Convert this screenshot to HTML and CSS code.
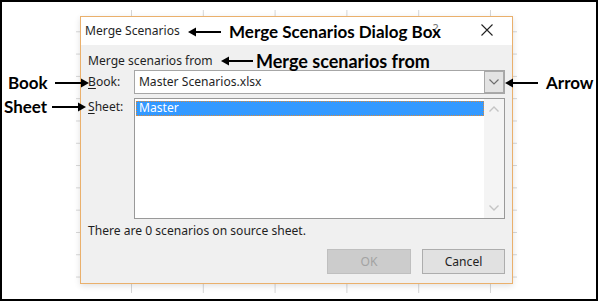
FILE: index.html
```html
<!DOCTYPE html>
<html>
<head>
<meta charset="utf-8">
<link rel="stylesheet" href="styles.css">
</head>
<body>
<div class="frame">
  <div class="sheet">
    <div class="dialog">
      <div class="titlebar">
        <span class="title">Merge Scenarios</span>
        <span class="help">?</span>
        <svg class="close" width="12" height="12" viewBox="0 0 12 12"><path d="M0.5 0.5 L11.5 11.5 M11.5 0.5 L0.5 11.5" stroke="#222" stroke-width="1.1" fill="none"/></svg>
      </div>
      <div class="body">
        <div class="group-label">Merge scenarios from</div>
        <div class="row">
          <span class="label"><u>B</u>ook:</span>
          <div class="combo">
            <span class="combo-text">Master Scenarios.xlsx</span>
            <span class="drop">
              <svg width="10" height="6" viewBox="0 0 10 6"><path d="M0.5 0.5 L5 5 L9.5 0.5" stroke="#6d6d6d" stroke-width="1.2" fill="none"/></svg>
            </span>
          </div>
        </div>
        <div class="row sheet-row">
          <span class="label"><u>S</u>heet:</span>
          <div class="listbox">
            <div class="items">
              <div class="item selected">Master</div>
            </div>
            <div class="scrollbar">
              <svg width="10" height="6" viewBox="0 0 10 6"><path d="M0.5 5.5 L5 1 L9.5 5.5" stroke="#c4c4c4" stroke-width="1.4" fill="none"/></svg>
              <svg width="10" height="6" viewBox="0 0 10 6"><path d="M0.5 0.5 L5 5 L9.5 0.5" stroke="#c4c4c4" stroke-width="1.4" fill="none"/></svg>
            </div>
          </div>
        </div>
        <div class="status">There are 0 scenarios on source sheet.</div>
        <div class="buttons">
          <button class="btn disabled">OK</button>
          <button class="btn">Cancel</button>
        </div>
      </div>
    </div>
  </div>

  <div class="note note-title">
    <svg class="arrow" width="33" height="10" viewBox="0 0 33 10"><path d="M2 5 H33" stroke="#000" stroke-width="2"/><path d="M0 5 L8 0.5 L8 9.5 Z" fill="#000"/></svg>
    <span>Merge Scenarios Dialog Box</span>
  </div>
  <div class="note note-from">
    <svg class="arrow" width="32" height="10" viewBox="0 0 32 10"><path d="M2 5 H32" stroke="#000" stroke-width="2"/><path d="M0 5 L8 0.5 L8 9.5 Z" fill="#000"/></svg>
    <span>Merge scenarios from</span>
  </div>
  <div class="note note-book">
    <span>Book</span>
    <svg class="arrow" width="34" height="10" viewBox="0 0 34 10"><path d="M0 5 H32" stroke="#000" stroke-width="2"/><path d="M34 5 L26 0.5 L26 9.5 Z" fill="#000"/></svg>
  </div>
  <div class="note note-sheet">
    <span>Sheet</span>
    <svg class="arrow" width="34" height="10" viewBox="0 0 34 10"><path d="M0 5 H32" stroke="#000" stroke-width="2"/><path d="M34 5 L26 0.5 L26 9.5 Z" fill="#000"/></svg>
  </div>
  <div class="note note-arrow">
    <svg class="arrow" width="33" height="10" viewBox="0 0 33 10"><path d="M2 5 H33" stroke="#000" stroke-width="2"/><path d="M0 5 L8 0.5 L8 9.5 Z" fill="#000"/></svg>
    <span>Arrow</span>
  </div>
</div>
</body>
</html>
```
FILE: styles.css
```css
* { box-sizing: border-box; }
html, body { margin: 0; padding: 0; background: #fff; }

.frame {
  position: relative;
  width: 598px;
  height: 301px;
  border: 2px solid #000;
  background: #fff;
  overflow: hidden;
}

.sheet {
  margin-left: 74px;
  margin-top: 8px;
  width: 441px;
  height: 283px;
  padding: 6px 0 0 4px;
  background-color: #fff;
  background-image:
    linear-gradient(to right, #d6d6d6 1px, transparent 1px),
    linear-gradient(to bottom, #d6d6d6 1px, transparent 1px);
  background-size: 71.8px 22.3px;
  background-position: 55px -1px;
}

.dialog {
  width: 433px;
  height: 268px;
  border: 1px solid #eab06c;
  background: #f0f0f0;
  display: flex;
  flex-direction: column;
  box-shadow: 0 2px 6px rgba(0,0,0,0.12);
  font-family: "Noto Sans", "Open Sans", sans-serif;
  font-size: 12.1px;
  color: #1f1f1f;
}

.titlebar {
  height: 28px;
  background: #fff;
  display: flex;
  align-items: center;
  padding-left: 4px;
  position: relative;
}
.title { line-height: 16px; }
.help {
  position: absolute;
  left: 352px;
  top: 3px;
  color: #777;
  font-size: 12px;
}
.close {
  position: absolute;
  left: 400px;
  top: 7px;
}

.body {
  flex: 1;
  padding: 8px 7px 0 7px;
  display: flex;
  flex-direction: column;
}

.group-label { line-height: 16px; }

.row {
  display: flex;
  align-items: center;
  margin-top: 1px;
}
.label {
  width: 46px;
  line-height: 16px;
}
.label u { text-decoration-thickness: 1px; text-underline-offset: 2px; }

.combo {
  width: 372px;
  height: 24px;
  border: 1px solid #a6a6a6;
  background: #fff;
  display: flex;
  align-items: center;
  justify-content: space-between;
  padding-left: 4px;
}
.combo-text { line-height: 16px; }
.drop {
  width: 20px;
  height: 22px;
  background: #e3e3e3;
  border: 1px solid #a9a9a9;
  display: flex;
  align-items: center;
  justify-content: center;
}

.sheet-row {
  align-items: flex-start;
  margin-top: 4px;
}
.sheet-row .label { margin-top: 1px; }

.listbox {
  width: 371px;
  height: 121px;
  border: 1px solid #999;
  background: #fff;
  display: flex;
}
.items {
  flex: 1;
  padding: 2px 0 0 1px;
}
.item {
  height: 15px;
  line-height: 14px;
  padding-left: 3px;
}
.item.selected {
  background: #3399ff;
  color: #fff;
  outline: 1px dotted #d98a3a;
  outline-offset: -1px;
}
.scrollbar {
  width: 20px;
  background: #f4f4f4;
  display: flex;
  flex-direction: column;
  justify-content: space-between;
  align-items: center;
  padding: 7px 0 7px 0;
}

.status {
  margin-top: 4px;
  line-height: 16px;
}

.buttons {
  display: flex;
  justify-content: flex-end;
  gap: 11px;
  margin-top: 10px;
}
.btn {
  font: inherit;
  width: 84px;
  height: 25px;
  border: 1px solid #adadad;
  background: #e1e1e1;
  color: #1f1f1f;
  padding: 0;
}
.btn.disabled {
  background: #cccccc;
  border-color: #bfbfbf;
  color: #a3a3a3;
}
.btn:last-child { width: 83px; }

.note {
  position: absolute;
  display: flex;
  align-items: center;
  gap: 3px;
  font-family: "Lato", "Open Sans", sans-serif;
  font-weight: 700;
  font-size: 17px;
  color: #000;
  line-height: 18px;
}
.note-title { left: 186px; top: 21px; gap: 8px; }
.note-from { left: 219px; top: 50px; gap: 3px; font-size: 18px; }
.note-book { left: 6px; top: 72px; gap: 7px; }
.note-sheet { left: 2px; top: 96px; gap: 5px; }
.note-arrow { left: 503px; top: 72px; gap: 8px; }
```
